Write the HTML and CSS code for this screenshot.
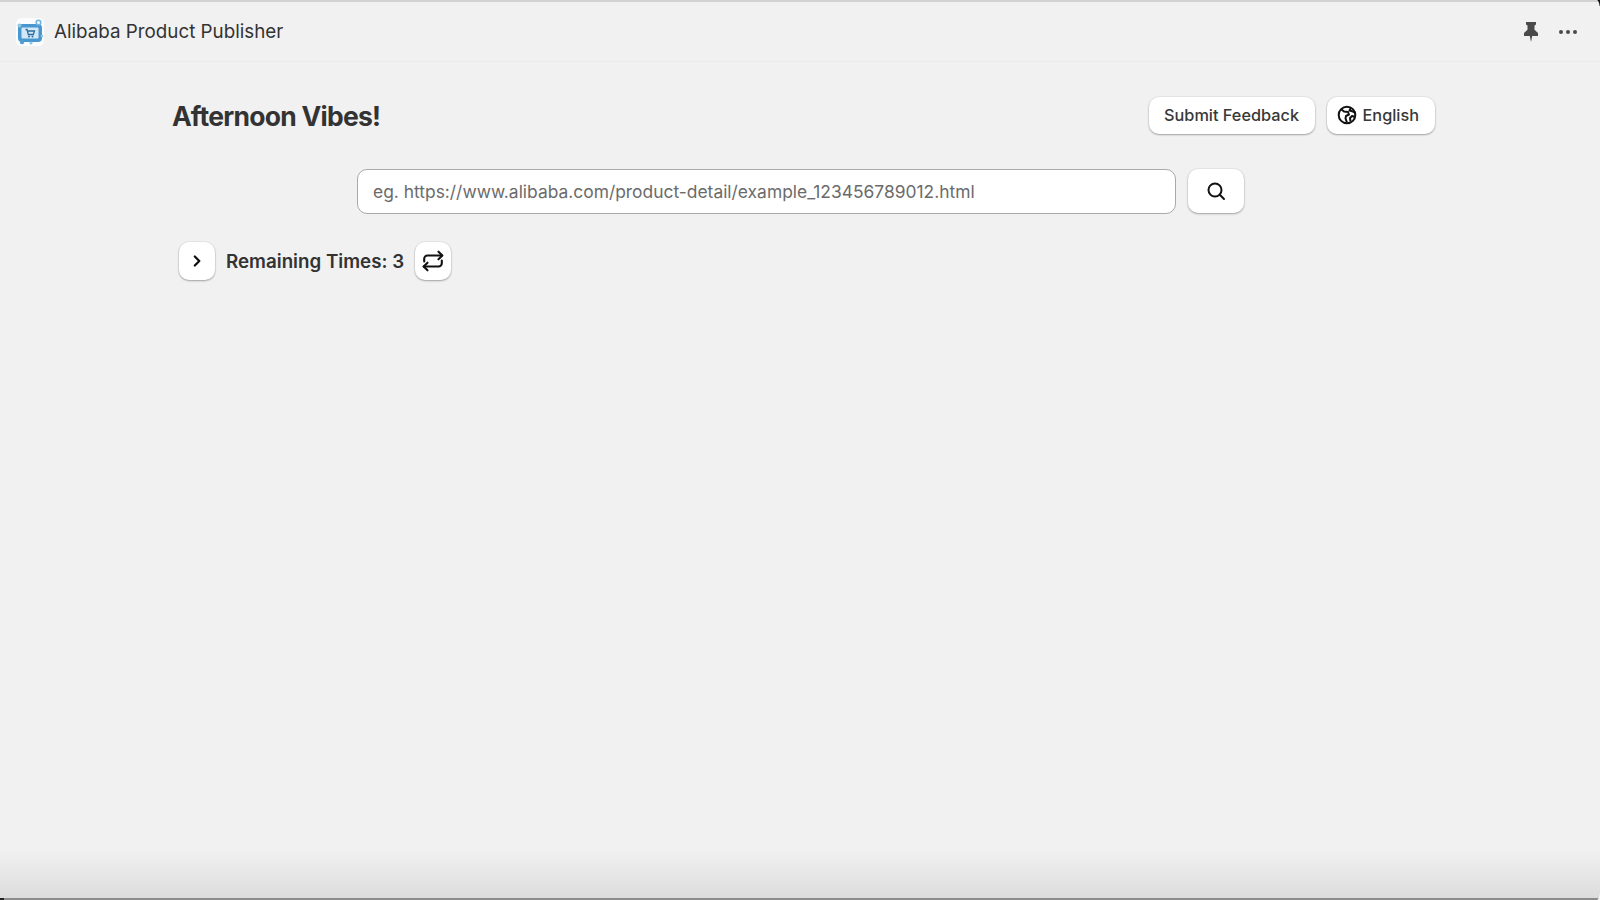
FILE: index.html
```html
<!DOCTYPE html>
<html lang="en">
<head>
<meta charset="utf-8">
<title>Alibaba Product Publisher</title>
<link rel="stylesheet" href="styles.css">
</head>
<body>
<div class="window">
  <header class="titlebar">
    <div class="brand">
      <span class="logo">
        <svg width="28" height="28" viewBox="0 0 28 28">
          <rect width="28" height="28" rx="5" fill="#fbfcfd"/>
          <rect x="2" y="6" width="24" height="18" rx="4" fill="#4a97cf"/>
          <circle cx="22.500" cy="4.500" r="2.300" fill="#fbfcfd" stroke="#6db5e0" stroke-width="1.600"/>
          <circle cx="3.500" cy="7.500" r="2" fill="#8cc4e6"/>
          <circle cx="6" cy="24" r="2.200" fill="#4f9fd6"/>
          <circle cx="15" cy="25" r="1.500" fill="#8cc4e6"/>
          <circle cx="26" cy="18" r="1.300" fill="#8cc4e6"/>
          <rect x="5.500" y="9.500" width="17" height="11" rx="1" fill="#d3e8f6"/>
          <path d="M9.500 11.500h1.500l1.300 5h5l1.200-3.500h-7" fill="none" stroke="#2f6d9e" stroke-width="1.300"/>
          <circle cx="13" cy="18.500" r="1" fill="#2f6d9e"/>
          <circle cx="16.500" cy="18.500" r="1" fill="#2f6d9e"/>
        </svg>
      </span>
      <span class="app-name">Alibaba Product Publisher</span>
    </div>
    <div class="window-actions">
      <svg class="pin" width="16" height="22" viewBox="0 0 16 22">
        <path d="M3 1h10v2.500l-1.500 1v4.300l3.500 3.200v3H9.200L8 21l-1.200-6H1v-3l3.500-3.200V4.500L3 3.500z" fill="#4a4a4a"/>
      </svg>
      <span class="dots"><i></i><i></i><i></i></span>
    </div>
  </header>

  <main class="content">
    <div class="top-row">
      <h1 class="greeting">Afternoon Vibes!</h1>
      <div class="top-actions">
        <button class="btn btn-feedback">Submit Feedback</button>
        <button class="btn btn-lang">
          <svg width="20" height="20" viewBox="0 0 20 20" fill="none" stroke="#111" stroke-width="2" stroke-linejoin="round">
            <circle cx="10" cy="10" r="8.300"/>
            <path d="M4.200 4.200 7 6.500l4 .5 1 2.500-3 1.500-.5 2.500 1.500 4.200M14 2.600 12.500 5.500l3.500 1 2 1M18 12l-3-1-2 2 .5 3.500"/>
          </svg>
          <span>English</span>
        </button>
      </div>
    </div>

    <div class="search-row">
      <input class="search-input" type="text" placeholder="eg. https://www.alibaba.com/product-detail/example_123456789012.html">
      <button class="btn btn-search" aria-label="Search">
        <svg width="20" height="20" viewBox="0 0 20 20" fill="none" stroke="#111" stroke-width="2" stroke-linecap="round">
          <circle cx="9" cy="9" r="6.500"/>
          <path d="m13.800 13.800 4.200 4.200"/>
        </svg>
      </button>
    </div>

    <div class="remaining-row">
      <button class="btn btn-icon" aria-label="Expand">
        <svg width="12" height="14" viewBox="0 0 12 14" fill="none" stroke="#111" stroke-width="2.300" stroke-linecap="round" stroke-linejoin="round">
          <path d="m3.800 2.500 4.500 4.500-4.500 4.500"/>
        </svg>
      </button>
      <span class="remaining">Remaining Times: 3</span>
      <button class="btn btn-icon" aria-label="Refresh">
        <svg width="22" height="22" viewBox="0 0 20 20" fill="none" stroke="#111" stroke-width="1.900" stroke-linecap="round" stroke-linejoin="round">
          <path d="M2 10.500V8a3 3 0 0 1 3-3h13"/>
          <path d="m15 1.500 3.500 3.500-3.500 3.500"/>
          <path d="M18 9.500V12a3 3 0 0 1-3 3H1.500"/>
          <path d="M5 11.500 1.500 15 5 18.500"/>
        </svg>
      </button>
    </div>
  </main>

  <div class="bottom-shade"></div>
  <span class="corner corner-tr"></span>
  <span class="corner corner-br"></span>
  <span class="corner corner-bl"></span>
</div>
</body>
</html>
```

FILE: styles.css
```css
* { box-sizing: border-box; }

html, body {
  margin: 0;
  height: 100%;
}

body {
  background: #f1f1f1;
  font-family: Inter, "Liberation Sans", sans-serif;
  color: #333;
  overflow: hidden;
}

.window {
  position: relative;
  height: 900px;
  display: flex;
  flex-direction: column;
  border-top: 2px solid #d2d2d2;
  border-bottom: 2px solid #8c8c8c;
}

.titlebar {
  height: 60px;
  flex: none;
  display: flex;
  align-items: center;
  justify-content: space-between;
  padding: 0 23px 0 16px;
  border-bottom: 1px solid #ebebeb;
}

.brand {
  display: flex;
  align-items: center;
  gap: 10px;
}

.logo {
  display: flex;
  width: 28px;
  height: 28px;
}

.app-name {
  font-size: 18.800px;
  color: #333;
}

.window-actions {
  display: flex;
  align-items: center;
  gap: 20px;
}

.pin { display: block; }

.dots {
  display: flex;
  gap: 3px;
}

.dots i {
  width: 4px;
  height: 4px;
  border-radius: 50%;
  background: #4a4a4a;
}

.content {
  flex: 1;
  padding: 0 165px 0 172px;
}

.top-row {
  display: flex;
  align-items: center;
  justify-content: space-between;
  padding-top: 34px;
}

.greeting {
  margin: 0;
  padding-top: 2px;
  font-size: 26.500px;
  line-height: 37px;
  font-weight: 700;
  letter-spacing: -0.750px;
  color: #333;
}

.top-actions {
  display: flex;
  gap: 12px;
}

.btn {
  display: flex;
  align-items: center;
  justify-content: center;
  gap: 6px;
  height: 37px;
  padding: 0 15px 1px;
  border: 0;
  border-radius: 10px;
  background: #fff;
  font: 500 16.300px Inter, "Liberation Sans", sans-serif;
  color: #383838;
  box-shadow: 0 1px 2px rgba(0, 0, 0, 0.300), 0 0 0 1px rgba(0, 0, 0, 0.040);
}

.btn-feedback { padding: 0 15.500px 1px; }

.btn-lang { padding: 0 16px 1px 10px; }

.search-row {
  display: flex;
  gap: 12px;
  margin: 34px 0 0 185px;
}

.search-input {
  width: 819px;
  height: 45px;
  padding: 0 15px;
  border: 1px solid #a9a9a9;
  border-radius: 10px;
  background: #fff;
  font: 400 17.420px Inter, "Liberation Sans", sans-serif;
  color: #333;
  outline: none;
}

.search-input::placeholder {
  color: #6b6b6b;
  opacity: 1;
}

.btn-search {
  width: 56px;
  height: 44px;
  padding: 0;
}

.remaining-row {
  display: flex;
  align-items: center;
  gap: 11px;
  margin: 28px 0 0 7px;
}

.btn-icon {
  width: 36px;
  height: 38px;
  padding: 0;
}

.remaining {
  font-size: 18.750px;
  font-weight: 600;
  color: #333;
}

.bottom-shade {
  flex: none;
  height: 48px;
  background: linear-gradient(to bottom, #f1f1f1, #dcdcdc);
}

.corner {
  position: absolute;
  right: 0;
  width: 10px;
  height: 6px;
}

.corner-tr {
  top: -2px;
  background: radial-gradient(circle at 0 100%, transparent 9px, #111 10px);
}

.corner-br {
  bottom: -2px;
  background: radial-gradient(circle at 0 0, transparent 9px, #f5f5f5 10px);
}

.corner-bl {
  left: 0;
  right: auto;
  bottom: -2px;
  width: 4px;
  height: 2px;
  background: #222;
}
```
